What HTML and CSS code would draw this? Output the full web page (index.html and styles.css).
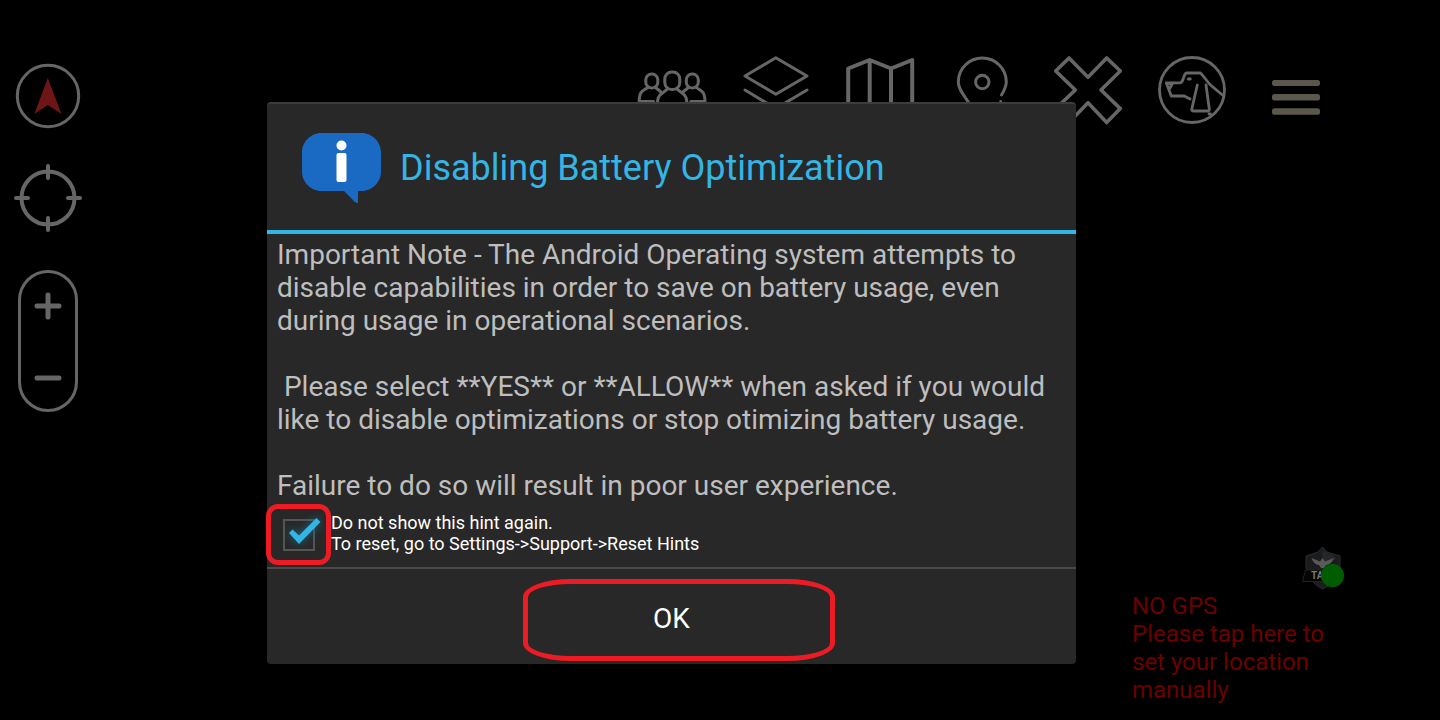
FILE: index.html
```html
<!DOCTYPE html>
<html lang="en">
<head>
<meta charset="utf-8">
<meta name="viewport" content="width=device-width, initial-scale=1">
<title>Disabling Battery Optimization</title>
<link rel="stylesheet" href="styles.css">
</head>
<body>
<div class="screen">
  <aside class="map-tools">
    <button class="tool" type="button" aria-label="North up">
      <svg class="icon" viewBox="0 0 72 72"><circle cx="36" cy="36" r="30.7" stroke-width="3"/><path class="needle" d="M35.8 18 49.5 54 35.8 45 22.3 54z"/></svg>
    </button>
    <button class="tool" type="button" aria-label="Center on self">
      <svg class="icon" viewBox="0 0 72 72"><circle cx="36" cy="36" r="26.5" stroke-width="4"/><path stroke-width="4" d="M36 4v12M36 56v12M4 36h12M56 36h12"/></svg>
    </button>
    <div class="zoom-control">
      <button class="zoom-button" type="button" aria-label="Zoom in">
        <svg class="zoom-icon" viewBox="0 0 28 28"><path d="M14 3v22M3 14h22"/></svg>
      </button>
      <button class="zoom-button" type="button" aria-label="Zoom out">
        <svg class="zoom-icon" viewBox="0 0 28 28"><path d="M3 14h22"/></svg>
      </button>
    </div>
  </aside>

  <main class="map">
    <nav class="toolbar" aria-label="Tools">
      <button class="tool" type="button" aria-label="Contacts">
        <svg class="icon" viewBox="0 0 72 72"><rect x="9.8" y="20" width="12" height="14" rx="5.8"/><rect x="50.3" y="20" width="12" height="14" rx="5.8"/><rect x="28.8" y="18" width="15" height="17.5" rx="7"/><path d="M17.5 47.5H3.2C3.2 43 3.6 39.5 6 37.5 8 35.5 10 35 12.5 33M19.5 33.5 24.5 37.5M21.5 49C21.500 44 23 41.5 25.5 39.8L31.5 35M41 35l6 4.8C49.5 41.5 50.8 44 50.8 49M54.8 47.5H69C69 43 68.5 39.5 66 37.5 64 35.5 62 35 59.8 33M52.5 33.5 47.5 37.5"/></svg>
      </button>
      <button class="tool" type="button" aria-label="Overlays">
        <svg class="icon" viewBox="0 0 72 72"><path d="M35.8 3.8 67 22 35.8 40.3 5 22zM5 36l30.8 18.5L67 36"/></svg>
      </button>
      <button class="tool" type="button" aria-label="Maps">
        <svg class="icon" viewBox="0 0 72 72"><path stroke-width="4" d="M4.2 14.5 25.7 6 47 14.5 68.2 6V58L47 66 25.7 58 4.2 66zM25.7 6V58M47 14.5V66"/></svg>
      </button>
      <button class="tool" type="button" aria-label="Points">
        <svg class="icon" viewBox="0 0 72 72"><circle cx="34.3" cy="28" r="6.7"/><path d="M21 49C15 40 10.3 35 10.3 28a24 24 0 0 1 48 0C58.3 33 56.500 36 53.5 41M52.7 47.5v.5"/></svg>
      </button>
      <button class="tool" type="button" aria-label="Close tools">
        <svg class="icon" viewBox="0 0 72 72"><path stroke-width="3.6" d="M17 4 36 23.3 54.7 4 68.3 17 49 36 68.3 54.6 54.7 68.6 36 48.7 17 68.6 3.7 54.6 23.3 36 3.7 17z"/></svg>
      </button>
      <button class="tool" type="button" aria-label="Watchdog">
        <svg class="icon" viewBox="0 0 72 72"><circle cx="36" cy="36" r="32.5" stroke-width="2.8"/><path stroke-width="2.8" d="M10.3 28.8H24C26.5 28.8 26.7 26 27.6 23.5 28.4 21 28.8 19 31 19H44.5C48 22.5 51 27.5 54.5 31L67 41.5M10.3 29 15.3 42H28.3L34 45M11.5 29.5H16.5L13.3 35M41.3 31 35.8 55Q35.5 57 37.5 57H52Q53.5 57 53.3 55L50 31M53 60h1.5M32.3 25h2"/></svg>
      </button>
      <button class="tool" type="button" aria-label="Menu">
        <svg class="icon" viewBox="0 0 72 72"><g class="bars"><rect x="12" y="26" width="48" height="6" rx="2.5"/><rect x="12" y="40" width="48" height="6.5" rx="2.5"/><rect x="12" y="54.3" width="48" height="6.5" rx="2.5"/></g></svg>
      </button>
    </nav>

    <section class="location">
      <svg class="shield" viewBox="0 0 44 44" aria-hidden="true">
        <path fill="#1b1c1d" stroke="#2c2d2e" d="M20.500 1 25 6 38 10V22C37 33 29 39 20.500 43 13 39 7 34 4 22V10L16 6z"/>
        <path fill="#262728" d="M20.500 4 35 12 20.500 22z"/>
        <path fill="#5a5a5a" d="M9.500 12 18 15.500 20.500 12 23 15.500 32 12Q29 19 24 19L22 22H19L17 19Q12 19 9.500 12z"/>
        <path fill="#050505" stroke="#222" d="M3.500 24H40L37 35.500H.5z"/>
        <text class="shield-text" x="9" y="33">TAK</text>
        <circle cx="30.5" cy="29.5" r="11.5" fill="#005c00"/>
      </svg>
      <p class="gps">NO GPS<br>Please tap here to set your location manually</p>
    </section>
  </main>

  <div class="overlay">
    <section class="dialog" role="dialog" aria-labelledby="dialog-title">
      <header class="dialog-header">
        <svg class="info" viewBox="0 0 82 72" aria-hidden="true">
          <path fill="#1a69c2" d="M20 1H61C71 1 80 10 80 20V40C80 50 71 59 61 59H57L57 71Q54 71 51 67L43 59H20C10 59 1 50 1 40V20C1 10 10 1 20 1z"/>
          <circle cx="40.500" cy="13.5" r="5" fill="#fff"/><rect x="35.500" y="21" width="10" height="29" rx="2" fill="#fff"/>
        </svg>
        <h1 class="dialog-title" id="dialog-title">Disabling Battery Optimization</h1>
      </header>
      <div class="dialog-body">
        <p class="message">Important Note - The Android Operating system attempts to disable capabilities in order to save on battery usage, even during usage in operational scenarios.

 Please select **YES** or **ALLOW** when asked if you would like to disable optimizations or stop otimizing battery usage.

Failure to do so will result in poor user experience.</p>
        <div class="hint">
          <span class="check">
            <input class="check-box" type="checkbox" id="hide-hint" checked>
            <svg class="check-mark" viewBox="0 0 44 36" aria-hidden="true"><path d="M6 18 9.5 14.500 16 20.500 33.500 3 37.500 7 16 29z"/></svg>
          </span>
          <label class="hint-label" for="hide-hint">Do not show this hint again.<br>To reset, go to Settings-&gt;Support-&gt;Reset Hints</label>
        </div>
      </div>
      <footer class="dialog-footer">
        <button class="ok" type="button">OK</button>
      </footer>
    </section>
  </div>
</div>
</body>
</html>
```
FILE: styles.css
```css
*,
*::after {
  box-sizing: border-box;
}

body {
  margin: 0;
  background: #000;
  font-family: Roboto, "Liberation Sans", sans-serif;
}

button {
  padding: 0;
  border: 0;
  background: none;
  color: inherit;
  font: inherit;
}

.screen {
  position: relative;
  display: flex;
  min-height: 100vh;
}

.map-tools {
  display: flex;
  flex-direction: column;
  align-items: center;
  gap: 30px;
  padding: 60px 12px;
}

.tool {
  display: block;
}

.icon {
  display: block;
  width: 72px;
  height: 72px;
  fill: none;
  stroke: #666;
  stroke-width: 3;
  stroke-linecap: round;
  stroke-linejoin: round;
}

.needle {
  fill: #6e1515;
  stroke: none;
}

.bars {
  fill: #5b574c;
  stroke: none;
}

.zoom-control {
  display: flex;
  flex-direction: column;
  justify-content: space-between;
  align-items: center;
  height: 142px;
  width: 60px;
  margin-top: 6px;
  padding: 19px 0 17px;
  border: 3px solid #666;
  border-radius: 30px;
}

.zoom-icon {
  display: block;
  width: 28px;
  height: 28px;
  fill: none;
  stroke: #666;
  stroke-width: 5;
  stroke-linecap: round;
}

.map {
  flex: 1;
  display: flex;
  flex-direction: column;
  justify-content: space-between;
  align-items: flex-end;
}

.toolbar {
  display: flex;
  gap: 32px;
  padding: 54px 108px 0 0;
}

.location {
  display: flex;
  flex-direction: column;
  align-items: flex-end;
  gap: 2px;
  width: 308px;
  padding: 0 94px 16px 0;
}

.shield {
  width: 44px;
  height: 44px;
}

.shield-text {
  fill: #777;
  font-size: 10px;
  font-weight: 700;
}

.gps {
  width: 100%;
  margin: 0;
  color: #6a0000;
  font-size: 24px;
  line-height: 28px;
}

.overlay {
  position: absolute;
  inset: 0;
  display: flex;
  align-items: center;
  justify-content: center;
  padding: 46px 97px 0 0;
}

.dialog {
  width: 100%;
  max-width: 809px;
  border-top: 2px solid #3c3c3c;
  border-radius: 4px;
  background: #282828;
}

.dialog-header {
  display: flex;
  align-items: center;
  gap: 17px;
  padding: 28px 34px 26px;
  border-bottom: 4px solid #33b5e5;
}

.info {
  width: 82px;
  height: 72px;
}

.dialog-title {
  margin: 0;
  color: #33b5e5;
  font-size: 36px;
  font-weight: 400;
  line-height: 44px;
}

.dialog-body {
  padding: 4px 10px 13px;
}

.message {
  margin: 0;
  color: #bebebe;
  font-size: 28px;
  line-height: 33px;
  white-space: pre-wrap;
}

.hint {
  display: flex;
  align-items: flex-start;
  gap: 16px;
  padding: 10px 0 0 6px;
}

.check {
  position: relative;
  display: flex;
  margin-top: 7px;
}

.check::after {
  content: "";
  position: absolute;
  inset: -15px -16px -14px -17px;
  border: 5px solid #ed1c24;
  border-radius: 12px;
  pointer-events: none;
}

.check-box {
  appearance: none;
  width: 32px;
  height: 32px;
  margin: 0;
  border: 2px solid #555;
}

.check-mark {
  position: absolute;
  top: -4px;
  left: 0;
  width: 44px;
  height: 36px;
  fill: #33b5e5;
  filter: drop-shadow(0 0 4px #1d6a88);
  pointer-events: none;
}

.hint-label {
  color: #fff;
  font-size: 18px;
  line-height: 21px;
}

.dialog-footer {
  border-top: 2px solid #4a4a4a;
}

.ok {
  position: relative;
  display: block;
  width: 100%;
  padding: 33px 0 29px;
  color: #fff;
  font-size: 28px;
  line-height: 33px;
}

.ok::after {
  content: "";
  position: absolute;
  top: 10px;
  bottom: 3px;
  left: calc(50% - 149px);
  width: 312px;
  border: 5px solid #ed1c24;
  border-radius: 48px / 18px;
}
```
